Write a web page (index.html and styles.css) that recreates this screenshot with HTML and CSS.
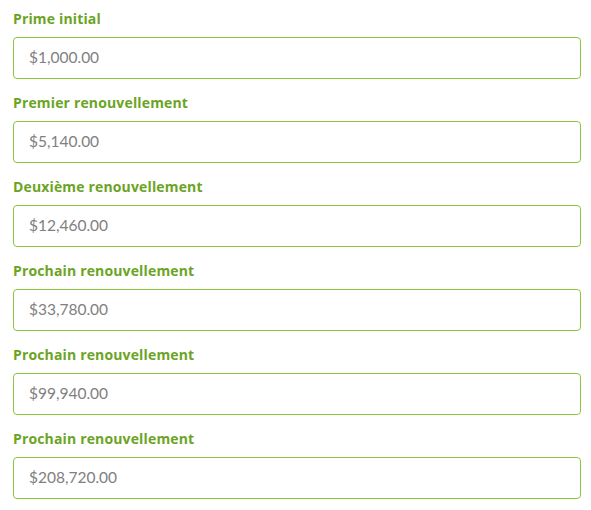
FILE: index.html
```html
<!DOCTYPE html>
<html lang="fr">
<head>
    <meta charset="UTF-8">
    <title>Renouvellements</title>
    <link rel="stylesheet" href="styles.css">
</head>
<body>
    <div class="premium-list">
        <div class="field">
            <label for="p0">Prime initial</label>
            <input type="text" id="p0" value="$1,000.00" readonly>
        </div>
        <div class="field">
            <label for="p1">Premier renouvellement</label>
            <input type="text" id="p1" value="$5,140.00" readonly>
        </div>
        <div class="field">
            <label for="p2">Deuxième renouvellement</label>
            <input type="text" id="p2" value="$12,460.00" readonly>
        </div>
        <div class="field">
            <label for="p3">Prochain renouvellement</label>
            <input type="text" id="p3" value="$33,780.00" readonly>
        </div>
        <div class="field">
            <label for="p4">Prochain renouvellement</label>
            <input type="text" id="p4" value="$99,940.00" readonly>
        </div>
        <div class="field">
            <label for="p5">Prochain renouvellement</label>
            <input type="text" id="p5" value="$208,720.00" readonly>
        </div>
    </div>
</body>
</html>
```

FILE: styles.css
```css
/* General */
body {
    margin: 0;
    padding: 0;
    font-family: Lato, "Open Sans", Arial, sans-serif;
    background: #ffffff;
}

.premium-list {
    width: 568px;
    padding: 9px 0 0 13px;
}

.field {
    display: flex;
    flex-direction: column;
    gap: 8px;
    margin-bottom: 14px;
}

.field label {
    font-family: "Open Sans", Arial, sans-serif;
    font-size: 14px;
    font-weight: bold;
    line-height: 20px;
    letter-spacing: 0.15px;
    color: #6ba424;
}

.field input {
    box-sizing: border-box;
    height: 42px;
    width: 100%;
    padding: 0 15px 2px;
    font-family: inherit;
    font-size: 15.5px;
    color: #808080;
    border: 1px solid #8cc63f;
    border-radius: 4px;
    outline: none;
}
```
